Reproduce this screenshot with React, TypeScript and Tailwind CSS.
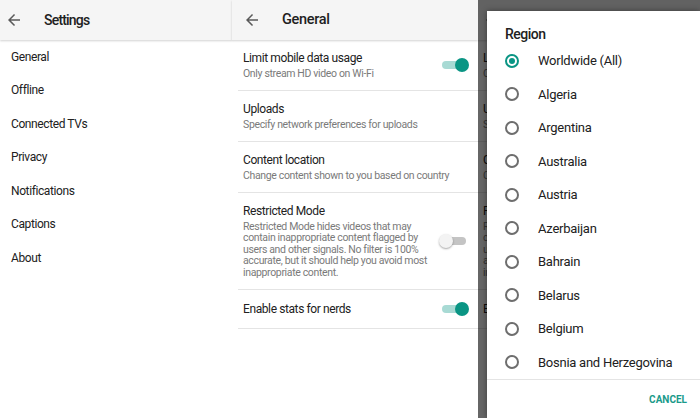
import { useState } from 'react'

const regions = [
  'Worldwide (All)',
  'Algeria',
  'Argentina',
  'Australia',
  'Austria',
  'Azerbaijan',
  'Bahrain',
  'Belarus',
  'Belgium',
  'Bosnia and Herzegovina',
]

const settings = ['General', 'Offline', 'Connected TVs', 'Privacy', 'Notifications', 'Captions', 'About']

function BackArrow() {
  return (
    <svg viewBox="0 0 24 24" className="w-[18px] h-[18px] fill-[#5a5a5a] shrink-0">
      <path d="M20 11H7.83l5.59-5.59L12 4l-8 8 8 8 1.41-1.41L7.83 13H20v-2z" />
    </svg>
  )
}

function Toggle({ on }: { on: boolean }) {
  return (
    <div className="relative w-[30px] h-[14px] shrink-0">
      <div className={`absolute left-[3px] top-[3px] w-[24px] h-[8px] rounded-full ${on ? 'bg-[#a8dad4]' : 'bg-[#c4c4c4]'}`} />
      <div
        className={`absolute top-0 w-[14px] h-[14px] rounded-full ${
          on ? 'left-[16px] bg-[#0a9584]' : 'left-0 bg-[#f3f3f3] shadow-[0_1px_2px_rgba(0,0,0,0.35)]'
        }`}
      />
    </div>
  )
}

function Row({ title, sub, toggle, narrow }: { title: string; sub?: string; toggle?: boolean; narrow?: boolean }) {
  return (
    <div className="flex items-center border-b border-[#e4e4e4] pl-[5px] pr-[9px] pt-[10px] pb-[11px]">
      <div className="flex-1 min-w-0">
        <div className={`text-[12px] tracking-[-0.4px] leading-[16px] text-[#212121] ${sub ? '' : 'mt-[1px]'}`}>{title}</div>
        {sub && (
          <div
            className={`text-[10.5px] tracking-[-0.35px] leading-[11.5px] mt-[1.5px] text-[#7a7a7a] ${
              narrow ? 'w-[192px]' : ''
            }`}
          >
            {sub}
          </div>
        )}
      </div>
      {toggle !== undefined && <Toggle on={toggle} />}
    </div>
  )
}

function GeneralPanel() {
  return (
    <div className="w-[246px] shrink-0 flex flex-col bg-white h-[418px]">
      <div className="h-10 bg-[#f5f5f5] flex items-center pl-[11px] shadow-[0_1px_2px_rgba(0,0,0,0.18)] relative">
        <BackArrow />
        <span className="ml-[21px] text-[14.5px] tracking-[-0.3px] font-medium text-[#212121]">General</span>
      </div>
      <div className="ml-[6px]">
        <Row title="Limit mobile data usage" sub="Only stream HD video on Wi-Fi" toggle={true} />
        <Row title="Uploads" sub="Specify network preferences for uploads" />
        <Row title="Content location" sub="Change content shown to you based on country" />
        <Row
          title="Restricted Mode"
          sub="Restricted Mode hides videos that may contain inappropriate content flagged by users and other signals. No filter is 100% accurate, but it should help you avoid most inappropriate content."
          toggle={false}
          narrow
        />
        <Row title="Enable stats for nerds" toggle={true} />
      </div>
    </div>
  )
}

export default function App() {
  const [region, setRegion] = useState(0)

  return (
    <div className="w-[700px] h-[418px] overflow-hidden flex bg-white font-['Roboto',sans-serif]">
      {/* settings list */}
      <div className="w-[232px] shrink-0 flex flex-col">
        <div className="h-10 bg-[#f5f5f5] flex items-center pl-[5px] shadow-[0_1px_2px_rgba(0,0,0,0.18)] relative">
          <BackArrow />
          <span className="ml-[21px] text-[14px] tracking-[-0.8px] font-medium text-[#212121]">Settings</span>
        </div>
        <div className="flex flex-col">
          {settings.map(s => (
            <div key={s} className="h-[33.5px] flex items-center pl-[11px] text-[12px] tracking-[-0.4px] text-[#212121]">
              {s}
            </div>
          ))}
        </div>
      </div>

      <GeneralPanel />

      {/* region dialog over dimmed general screen */}
      <div className="relative flex-1 flex overflow-hidden">
        <div className="w-[9px] shrink-0 overflow-hidden">
          <div className="-ml-[6px]">
            <GeneralPanel />
          </div>
        </div>
        <div className="flex-1">
          <div className="h-10 bg-[#f5f5f5]" />
        </div>
        <div className="absolute inset-0 bg-black/60" />
        <div className="absolute left-[9px] top-[11px] right-0 bottom-0 bg-white shadow-[0_0_6px_rgba(0,0,0,0.4)] flex flex-col">
          <div className="mt-[13px] h-5 pl-[18px] flex items-center text-[14px] tracking-[-0.5px] font-medium text-[#212121]">
            Region
          </div>
          <div className="flex flex-col">
            {regions.map((r, i) => (
              <button
                key={r}
                onClick={() => setRegion(i)}
                className="h-[33.5px] flex items-center pl-[18px] text-left"
              >
                <span
                  className={`w-[14px] h-[14px] rounded-full border-2 flex items-center justify-center shrink-0 ${
                    region === i ? 'border-[#0a9584]' : 'border-[#6e6e6e]'
                  }`}
                >
                  {region === i && <span className="w-[6px] h-[6px] rounded-full bg-[#0a9584]" />}
                </span>
                <span className="ml-[19px] text-[13px] tracking-[-0.25px] text-[#212121]">{r}</span>
              </button>
            ))}
          </div>
          <div className="border-t border-[#e4e4e4] h-10 flex items-center justify-end pr-[13px]">
            <span className="text-[10px] font-bold text-[#1a9a8a]">CANCEL</span>
          </div>
        </div>
      </div>
    </div>
  )
}
